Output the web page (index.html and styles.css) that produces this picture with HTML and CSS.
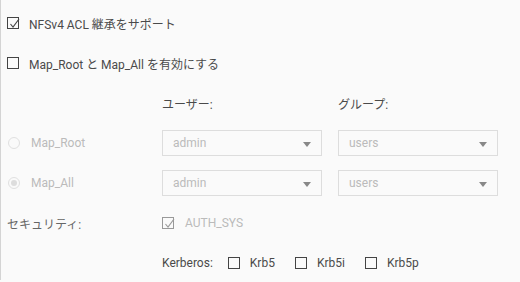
FILE: index.html
```html
<!DOCTYPE html>
<html lang="ja">
<head>
  <meta charset="UTF-8" />
  <title>NFS 設定</title>
  <link rel="stylesheet" href="styles.css">
</head>
<body>
  <div class="panel">
    <div class="row">
      <span class="check">
        <svg viewBox="0 0 12 12" width="12" height="12"><polyline points="2.5,6 5,9 11,1" fill="none" stroke="#444" stroke-width="1.1"/></svg>
      </span>
      <span class="text">NFSv4 ACL 継承をサポート</span>
    </div>
    <div class="row">
      <span class="check"></span>
      <span class="text">Map_Root と Map_All を有効にする</span>
    </div>

    <div class="map-grid">
      <div class="cell"></div>
      <div class="cell head">ユーザー:</div>
      <div class="cell head">グループ:</div>

      <div class="cell">
        <span class="radio"></span>
        <span class="muted">Map_Root</span>
      </div>
      <div class="cell"><div class="select">admin<span class="arrow"></span></div></div>
      <div class="cell"><div class="select">users<span class="arrow"></span></div></div>

      <div class="cell">
        <span class="radio on"></span>
        <span class="muted">Map_All</span>
      </div>
      <div class="cell"><div class="select">admin<span class="arrow"></span></div></div>
      <div class="cell"><div class="select">users<span class="arrow"></span></div></div>

      <div class="cell label">セキュリティ:</div>
      <div class="cell span2">
        <span class="check disabled">
          <svg viewBox="0 0 12 12" width="12" height="12"><polyline points="2.5,6 5,9 11,1" fill="none" stroke="#999" stroke-width="1.1"/></svg>
        </span>
        <span class="muted">AUTH_SYS</span>
      </div>

      <div class="cell"></div>
      <div class="cell span2 kerberos">
        <span class="kb-label">Kerberos:</span>
        <span class="check"></span><span class="kb-item">Krb5</span>
        <span class="check"></span><span class="kb-item">Krb5i</span>
        <span class="check"></span><span class="kb-item">Krb5p</span>
      </div>
    </div>
  </div>
</body>
</html>
```

FILE: styles.css
```css
html, body {
  margin: 0;
  height: 100%;
  background: #fafafa;
}

body {
  font-family: "Roboto", "Noto Sans CJK JP", sans-serif;
  font-size: 12px;
  color: #4a4a4a;
}

.panel {
  border-left: 1px solid #d4d4d4;
  height: 280px;
  padding: 3px 0 0 6px;
  box-sizing: border-box;
}

.row {
  height: 40px;
  display: flex;
  align-items: center;
}

.text {
  margin-left: 10px;
}

.check {
  width: 10px;
  height: 10px;
  border: 1px solid #444;
  display: inline-flex;
  position: relative;
  flex: none;
}
.check svg {
  position: absolute;
  left: 0;
  top: 0;
}
.check.disabled {
  border-color: #999;
}

.map-grid {
  display: grid;
  grid-template-columns: 155px 176px 160px;
  grid-auto-rows: 40px;
}

.cell {
  display: flex;
  align-items: center;
}
.span2 {
  grid-column: span 2;
}

.label {
  color: #666;
}

.muted {
  color: #bbb;
  margin-left: 11px;
}

.radio {
  width: 12px;
  height: 12px;
  border: 1px solid #e0e0e0;
  border-radius: 50%;
  box-sizing: border-box;
  background: #fafafa;
  position: relative;
  margin-left: 1px;
}
.radio.on::after {
  content: "";
  position: absolute;
  left: 2px;
  top: 2px;
  width: 6px;
  height: 6px;
  border-radius: 50%;
  background: #ddd;
}

.select {
  width: 160px;
  height: 26px;
  box-sizing: border-box;
  border: 1px solid #ddd;
  background: #fafafa;
  color: #bbb;
  padding-left: 10px;
  display: flex;
  align-items: center;
  position: relative;
}
.arrow {
  position: absolute;
  right: 10px;
  top: 11px;
  width: 0;
  height: 0;
  border-left: 4px solid transparent;
  border-right: 4px solid transparent;
  border-top: 5px solid #888;
}

.kerberos .kb-label {
  margin-right: 15px;
}
.kb-item {
  margin-left: 10px;
  margin-right: 20px;
}
```
